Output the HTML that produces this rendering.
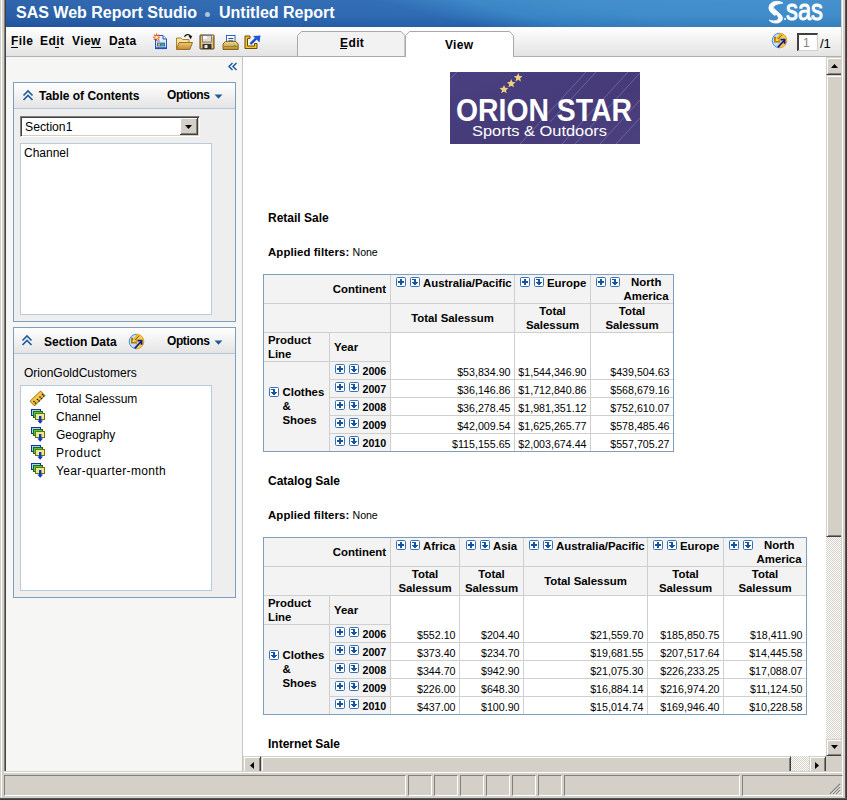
<!DOCTYPE html>
<html><head><meta charset="utf-8">
<style>
*{margin:0;padding:0;box-sizing:border-box}
html,body{width:847px;height:800px;overflow:hidden;background:#d4d0c8;font-family:"Liberation Sans",sans-serif}
.a{position:absolute}
.t{position:absolute;white-space:nowrap;line-height:1}
/* title */
#title{left:6px;top:0;width:835px;height:27px;background:linear-gradient(rgba(255,255,255,0.05),rgba(255,255,255,0.03) 55%,rgba(0,0,40,0.07)),linear-gradient(15deg,#2359a4 0%,#2964ae 30%,#2867b1 50%,#3382c4 60%,#3a88c8 72%,#3c8aca 100%)}
#toolbar{left:6px;top:27px;width:835px;height:29px;background:linear-gradient(#ffffff,#e3e3e3)}
.menu{font-size:12px;font-weight:bold;color:#000;top:35px;letter-spacing:0.4px}
.menu u{text-decoration:none}
.ul{position:absolute;height:1px;background:#000;top:47px}
.sbtn{background:#d4d0c8;border-top:1px solid #fff;border-left:1px solid #fff;box-shadow:inset -1px -1px 0 #808080}
.check{background-image:conic-gradient(#d4d0c8 25%,#fff 0 50%,#d4d0c8 0 75%,#fff 0);background-size:2px 2px}
.vbtn{background:#d4d0c8;border-top:1px solid #d4d0c8;border-left:1px solid #d4d0c8;border-bottom:1px solid #404040;box-shadow:inset 1px 1px 0 #fff,inset 0 -1px 0 #808080}
.hbtn{background:#d4d0c8;border-top:1px solid #d4d0c8;border-left:1px solid #d4d0c8;border-right:1px solid #404040;box-shadow:inset 1px 1px 0 #fff,inset -1px 0 0 #808080}
.pnl{border:1px solid #7f9dbd;background:#eeeeee}
.phd{background:linear-gradient(#ffffff,#e4e4e4);border-bottom:1px solid #b5c7da}
.hd{font-size:12px;font-weight:bold;color:#000}
.lst{background:#fff;border:1px solid #b9cadb}
.it{font-size:12px;color:#000}
</style></head><body>
<!-- window frame lines -->
<div class="a" style="left:1px;top:0;width:1px;height:797px;background:#fff"></div>
<div class="a" style="left:4px;top:0;width:1px;height:771px;background:#808080"></div>
<div class="a" style="left:5px;top:0;width:1px;height:771px;background:#404040"></div>
<div class="a" style="left:842px;top:0;width:1px;height:797px;background:#fff"></div>
<div class="a" style="left:845px;top:0;width:2px;height:800px;background:linear-gradient(90deg,#606060,#303030)"></div>
<div class="a" style="left:0;top:798px;width:847px;height:2px;background:linear-gradient(#606060,#303030)"></div>
<div class="a" style="left:4px;top:772px;width:838px;height:1px;background:#fff"></div>

<!-- title bar -->
<div id="title" class="a"></div>
<div class="t" style="left:16px;top:5px;font-size:16px;font-weight:bold;color:#fff">SAS Web Report Studio</div>
<div class="a" style="left:205px;top:12px;width:5px;height:5px;border-radius:50%;background:#a9c3e3"></div>
<div class="t" style="left:219px;top:5px;font-size:16px;font-weight:bold;color:#fff">Untitled Report</div>
<!-- sas logo -->
<svg class="a" style="left:764px;top:0" width="64" height="26" viewBox="0 0 64 26">
  <path d="M19 3 C14 0 6 1 5 7 C4.5 11 8 13.5 11 15.5 L13 13.5 C10 11.5 8 9 10 6 C12 3.8 16 3.8 19 3 Z" fill="#fff" stroke="#fff" stroke-width="0.8"/>
  <path d="M10 8.5 L17 15 C20 18 18.5 22 13.5 23 C9.5 23.5 6.5 22 5 20 C8 21 12 21.5 14 19.5 C15.5 17.5 13.5 15 8.5 11 Z" fill="#fff" stroke="#fff" stroke-width="0.8"/>
  <circle cx="21" cy="19" r="1" fill="#fff"/>
  <text x="22" y="20" font-family="Liberation Sans" font-size="29" fill="#fff" stroke="#fff" stroke-width="0.9" textLength="37" lengthAdjust="spacingAndGlyphs">sas</text>
</svg>

<!-- toolbar -->
<div id="toolbar" class="a"></div>
<div class="a" style="left:6px;top:56px;width:835px;height:1px;background:#b0b0b0"></div>
<div class="t menu" style="left:11px"><u>F</u>ile</div>
<div class="t menu" style="left:40px">Ed<u>i</u>t</div>
<div class="t menu" style="left:72px">Vie<u>w</u></div>
<div class="t menu" style="left:109px">D<u>a</u>ta</div>
<div class="ul" style="left:11px;width:7px"></div><div class="ul" style="left:55px;width:4px"></div><div class="ul" style="left:91px;width:10px"></div><div class="ul" style="left:118px;width:6px"></div>


<!-- toolbar icons -->
<svg class="a" style="left:152px;top:33px" width="17" height="17" viewBox="0 0 17 17">
 <defs><linearGradient id="dg" x1="0" y1="0" x2="0" y2="1"><stop offset="0" stop-color="#f6f9ff"/><stop offset="1" stop-color="#c4d8f6"/></linearGradient>
 <linearGradient id="fg" x1="0" y1="0" x2="0" y2="1"><stop offset="0" stop-color="#f0cc70"/><stop offset="1" stop-color="#c08830"/></linearGradient>
 <linearGradient id="pg" x1="0" y1="0" x2="0" y2="1"><stop offset="0" stop-color="#f2d890"/><stop offset="1" stop-color="#b88a30"/></linearGradient></defs>
 <path d="M3.5 2.5 L11 2.5 L14.5 6 L14.5 15 L3.5 15 Z" fill="url(#dg)" stroke="#2a55b5"/>
 <path d="M11 2.5 L11 6 L14.5 6" fill="#dce9fb" stroke="#2a55b5"/>
 <rect x="3" y="14.5" width="12" height="1.6" fill="#2450b0"/>
 <rect x="5" y="9.6" width="8" height="3.8" fill="#3b6bcb"/>
 <rect x="6" y="10.6" width="2" height="2" fill="#f0c020"/><rect x="9" y="10.6" width="3" height="2" fill="#2cc040"/>
 <rect x="5" y="7.6" width="3" height="1" fill="#5a88d8"/>
 <g stroke="#f05a10" stroke-width="1.1"><path d="M4.5 0.5 L4.5 8 M0.8 4.3 L8.2 4.3 M1.9 1.7 L7.1 6.9 M7.1 1.7 L1.9 6.9"/></g>
 <circle cx="4.5" cy="4.3" r="1.5" fill="#fff0c0"/>
</svg>
<svg class="a" style="left:175px;top:33px" width="19" height="18" viewBox="0 0 19 18">
 <path d="M1.5 5 L6 5 L7.5 6.5 L14 6.5 L14 16 L1.5 16 Z" fill="#f6e49a" stroke="#a88030"/>
 <path d="M1.5 16.5 L4 9.5 L17.5 9.5 L14.8 16.5 Z" fill="url(#fg)" stroke="#9a7228"/>
 <path d="M9.5 3.8 C10.5 1.2 14.2 0.8 15.6 3.4" stroke="#111" stroke-width="1.4" fill="none"/>
 <path d="M13.6 3.3 L17.2 2.8 L15.8 6.2 Z" fill="#111"/>
</svg>
<svg class="a" style="left:199px;top:34px" width="17" height="16" viewBox="0 0 17 16">
 <rect x="1" y="1" width="14" height="14" rx="0.5" fill="#d4a858" stroke="#5a3c10"/>
 <rect x="2.2" y="2" width="11.6" height="12" fill="#e8c478"/>
 <rect x="3.5" y="1.5" width="9" height="6.5" fill="#dcdcdc" stroke="#707070" stroke-width="0.8"/>
 <rect x="4" y="2" width="4" height="3" fill="#f8f8f8"/>
 <rect x="3.5" y="10" width="9" height="5" fill="#333"/>
 <rect x="5.5" y="11" width="3" height="3" fill="#e8e8e8"/>
 <rect x="13.2" y="1.5" width="1" height="1.2" fill="#fff"/>
</svg>
<svg class="a" style="left:222px;top:34px" width="17" height="17" viewBox="0 0 17 17">
 <rect x="4.5" y="1.5" width="8.5" height="8" fill="#fff" stroke="#2a64d0"/>
 <rect x="6.3" y="4" width="5" height="1.1" fill="#2050a0"/><rect x="6.3" y="6.3" width="5" height="1.1" fill="#2050a0"/>
 <path d="M1 10 L3.5 7.5 L14 7.5 L16.2 10 L16.2 15.5 L1 15.5 Z" fill="url(#pg)" stroke="#8a6418"/>
 <rect x="1.5" y="12" width="14.2" height="0.9" fill="#a07a28"/>
 <rect x="11.5" y="11" width="2" height="1" fill="#30c030"/>
</svg>
<svg class="a" style="left:244px;top:35px" width="18" height="15" viewBox="0 0 18 15">
 <path d="M1 1 L6 1 L6 3.5 L3.5 3.5 L3.5 11 L10.5 11 L10.5 8.5 L13 8.5 L13 13.5 L1 13.5 Z" fill="#f2c424" stroke="#6a4a08"/>
 <path d="M6.5 9 L12 3.5" stroke="#1048c8" stroke-width="2.4"/>
 <path d="M9 1 L16.5 0.5 L15.5 7.5 Z" fill="#1a56de"/>
</svg>
<!-- tabs -->
<svg class="a" style="left:297px;top:31px" width="109" height="26"><path d="M0.5 25.5 L0.5 4.5 L4.5 0.5 L104 0.5 L108.5 5 L108.5 25.5 L0.5 25.5" fill="#f2f2f2" stroke="#a9a9a9"/><path d="M107.5 5 L107.5 25" stroke="#c8c8c8"/></svg>
<div class="t menu" style="left:340px;top:37px">E<span style="">dit</span></div>
<div class="a" style="left:340px;top:48px;width:7px;height:1px;background:#000"></div>
<svg class="a" style="left:405px;top:31px" width="109" height="27"><path d="M0.5 26 L0.5 4.5 L4.5 0.5 L104.5 0.5 L108.5 4.5 L108.5 26" fill="#fff" stroke="#a9a9a9"/></svg>
<div class="t menu" style="left:445px;top:39px;letter-spacing:0.3px">View</div>
<!-- page nav -->
<svg class="a" style="left:771px;top:32px" width="17" height="17" viewBox="0 0 17 17">
 <path d="M8.5 1.2 A7.3 7.3 0 0 0 8.5 15.8 Z" fill="#c6def6" stroke="#4a88e0" stroke-width="1"/>
 <path d="M8.5 1.2 A7.3 7.3 0 0 1 8.5 15.8 Z" fill="#f6cc50" stroke="#e0a020" stroke-width="1"/>
 <path d="M10.8 1.8 L4.5 8" stroke="#f0b820" stroke-width="2.2"/>
 <path d="M11.3 2.8 L5.5 8.6" stroke="#6a4a00" stroke-width="0.8"/>
 <path d="M4 4.8 L4 9.6 L8.5 9.6" stroke="#b07800" stroke-width="2" fill="none"/>
 <rect x="4.6" y="7.2" width="2.4" height="1.8" fill="#ffe040"/>
 <path d="M6.8 15.2 L13 8.6" stroke="#0c1890" stroke-width="1.8"/>
 <path d="M9.5 7.6 L13.6 7.6 L13.6 11.8" stroke="#0c1890" stroke-width="1.8" fill="none"/>
 <path d="M6 14.4 L11.5 8.6" stroke="#a0d0ff" stroke-width="0.9"/>
</svg>
<div class="a" style="left:797px;top:33px;width:21px;height:18px;background:#fff;border-top:2px solid #404040;border-left:2px solid #404040;border-right:1px solid #d4d0c8;border-bottom:1px solid #d4d0c8"></div>
<div class="t" style="left:803px;top:37px;font-size:12px;color:#808080">1</div>
<div class="t" style="left:820px;top:37px;font-size:13px;color:#000">/1</div>

<!-- left panel -->
<div class="a" style="left:6px;top:57px;width:236px;height:714px;background:#f6f6f4"></div>
<div class="a" style="left:242px;top:57px;width:1px;height:714px;background:#c4c4c4"></div>


<!-- sidebar content -->
<svg class="a" style="left:228px;top:61px" width="11" height="11" viewBox="0 0 11 11"><path d="M4.5 2 L1 5.5 L4.5 9 M8.5 2 L5 5.5 L8.5 9" stroke="#1d5a9e" stroke-width="1.5" fill="none"/></svg>
<!-- TOC panel -->
<div class="a pnl" style="left:13px;top:82px;width:223px;height:240px"></div>
<div class="a phd" style="left:14px;top:83px;width:221px;height:26px"></div>
<svg class="a" style="left:22px;top:89px" width="12" height="12" viewBox="0 0 12 12"><path d="M1.5 6.5 L6 2 L10.5 6.5 M1.5 11 L6 6.5 L10.5 11" stroke="#1d5a9e" stroke-width="1.6" fill="none"/></svg>
<div class="t hd" style="left:39px;top:90px">Table of Contents</div>
<div class="t hd" style="left:167px;top:89px;letter-spacing:-0.4px">Options</div>
<svg class="a" style="left:214px;top:94px" width="9" height="6" viewBox="0 0 9 6"><path d="M0.5 0.5 L8.5 0.5 L4.5 4.8 Z" fill="#1d5a9e"/></svg>
<div class="a" style="left:20px;top:116px;width:180px;height:21px;background:#fff;border-top:1px solid #808080;border-left:1px solid #808080;border-right:1px solid #fff;border-bottom:1px solid #fff;box-shadow:inset 1px 1px 0 #404040,inset -1px -1px 0 #d4d0c8"></div>
<div class="t it" style="left:25px;top:121px;font-size:12.2px">Section1</div>
<div class="a" style="left:180px;top:118px;width:18px;height:17px;background:#d4d0c8;border-right:1px solid #404040;border-bottom:1px solid #404040;box-shadow:inset 1px 1px 0 #fff,inset -1px -1px 0 #808080"></div>
<svg class="a" style="left:185px;top:125px" width="7" height="4" viewBox="0 0 7 4"><path d="M0 0 L7 0 L3.5 4 Z" fill="#000"/></svg>
<div class="a lst" style="left:20px;top:143px;width:192px;height:172px"></div>
<div class="t it" style="left:24px;top:147px">Channel</div>
<!-- Section data panel -->
<div class="a pnl" style="left:13px;top:327px;width:223px;height:271px"></div>
<div class="a phd" style="left:14px;top:328px;width:221px;height:26px"></div>
<svg class="a" style="left:21px;top:334px" width="12" height="12" viewBox="0 0 12 12"><path d="M1.5 6.5 L6 2 L10.5 6.5 M1.5 11 L6 6.5 L10.5 11" stroke="#1d5a9e" stroke-width="1.6" fill="none"/></svg>
<div class="t hd" style="left:44px;top:335.5px">Section Data</div>
<svg class="a" style="left:128px;top:333px" width="17" height="17" viewBox="0 0 17 17">
 <path d="M8.5 1.2 A7.3 7.3 0 0 0 8.5 15.8 Z" fill="#c6def6" stroke="#4a88e0" stroke-width="1"/>
 <path d="M8.5 1.2 A7.3 7.3 0 0 1 8.5 15.8 Z" fill="#f6cc50" stroke="#e0a020" stroke-width="1"/>
 <path d="M10.8 1.8 L4.5 8" stroke="#f0b820" stroke-width="2.2"/>
 <path d="M11.3 2.8 L5.5 8.6" stroke="#6a4a00" stroke-width="0.8"/>
 <path d="M4 4.8 L4 9.6 L8.5 9.6" stroke="#b07800" stroke-width="2" fill="none"/>
 <rect x="4.6" y="7.2" width="2.4" height="1.8" fill="#ffe040"/>
 <path d="M6.8 15.2 L13 8.6" stroke="#0c1890" stroke-width="1.8"/>
 <path d="M9.5 7.6 L13.6 7.6 L13.6 11.8" stroke="#0c1890" stroke-width="1.8" fill="none"/>
 <path d="M6 14.4 L11.5 8.6" stroke="#a0d0ff" stroke-width="0.9"/>
</svg>
<div class="t hd" style="left:167px;top:335px;letter-spacing:-0.4px">Options</div>
<svg class="a" style="left:214px;top:340px" width="9" height="6" viewBox="0 0 9 6"><path d="M0.5 0.5 L8.5 0.5 L4.5 4.8 Z" fill="#1d5a9e"/></svg>
<div class="t it" style="left:24px;top:367px">OrionGoldCustomers</div>
<div class="a lst" style="left:20px;top:385px;width:192px;height:206px"></div>
<svg class="a" style="left:29px;top:390px" width="17" height="17" viewBox="0 0 17 17">
 <defs><linearGradient id="rl" x1="0" y1="0" x2="1" y2="1"><stop offset="0" stop-color="#ffe070"/><stop offset="1" stop-color="#e8a810"/></linearGradient></defs>
 <path d="M1 11.2 L11.6 1 L15.9 5.5 L5.5 15.9 Z" fill="url(#rl)" stroke="#8a5a00" stroke-width="0.9"/>
 <g fill="#111"><circle cx="5" cy="11.5" r="0.8"/><circle cx="6.5" cy="13" r="0.8"/><circle cx="8.5" cy="9.5" r="0.8"/><circle cx="10" cy="11" r="0.8"/><circle cx="11" cy="7" r="0.8"/><circle cx="12.5" cy="8.5" r="0.8"/><circle cx="13.5" cy="4.5" r="0.8"/><circle cx="14.8" cy="6" r="0.8"/></g>
</svg>
<div class="t it" style="left:56px;top:393px">Total Salessum</div>
<svg class="a" style="left:31px;top:409px" width="16" height="16" viewBox="0 0 16 16"><rect x="0.5" y="0.5" width="9" height="6" fill="#b0d0f8" stroke="#1030b0"/><rect x="2.5" y="2.5" width="9" height="6" fill="#40d040" stroke="#107010"/><rect x="4.5" y="4.5" width="9" height="6" fill="#f0e890" stroke="#707010"/><rect x="8" y="7" width="2.4" height="5" fill="#1038b8"/><path d="M6.3 11.5 L12.1 11.5 L9.2 14.8 Z" fill="#1038b8"/></svg><div class="t it" style="left:56px;top:411px">Channel</div>
<svg class="a" style="left:31px;top:427px" width="16" height="16" viewBox="0 0 16 16"><rect x="0.5" y="0.5" width="9" height="6" fill="#b0d0f8" stroke="#1030b0"/><rect x="2.5" y="2.5" width="9" height="6" fill="#40d040" stroke="#107010"/><rect x="4.5" y="4.5" width="9" height="6" fill="#f0e890" stroke="#707010"/><rect x="8" y="7" width="2.4" height="5" fill="#1038b8"/><path d="M6.3 11.5 L12.1 11.5 L9.2 14.8 Z" fill="#1038b8"/></svg><div class="t it" style="left:56px;top:429px">Geography</div>
<svg class="a" style="left:31px;top:445px" width="16" height="16" viewBox="0 0 16 16"><rect x="0.5" y="0.5" width="9" height="6" fill="#b0d0f8" stroke="#1030b0"/><rect x="2.5" y="2.5" width="9" height="6" fill="#40d040" stroke="#107010"/><rect x="4.5" y="4.5" width="9" height="6" fill="#f0e890" stroke="#707010"/><rect x="8" y="7" width="2.4" height="5" fill="#1038b8"/><path d="M6.3 11.5 L12.1 11.5 L9.2 14.8 Z" fill="#1038b8"/></svg><div class="t it" style="left:56px;top:447px;letter-spacing:0.55px">Product</div>
<svg class="a" style="left:31px;top:463px" width="16" height="16" viewBox="0 0 16 16"><rect x="0.5" y="0.5" width="9" height="6" fill="#b0d0f8" stroke="#1030b0"/><rect x="2.5" y="2.5" width="9" height="6" fill="#40d040" stroke="#107010"/><rect x="4.5" y="4.5" width="9" height="6" fill="#f0e890" stroke="#707010"/><rect x="8" y="7" width="2.4" height="5" fill="#1038b8"/><path d="M6.3 11.5 L12.1 11.5 L9.2 14.8 Z" fill="#1038b8"/></svg><div class="t it" style="left:56px;top:465px;letter-spacing:0.36px">Year-quarter-month</div>

<!-- content -->
<div id="content" class="a" style="left:243px;top:57px;width:583px;height:699px;background:#fff;overflow:hidden"></div>


<!-- report -->
<svg width="0" height="0" style="position:absolute"><defs>
<symbol id="ipl" viewBox="0 0 10 10"><rect x="0.5" y="0.5" width="9" height="9" rx="1.2" fill="#fff" stroke="#3670b4"/><g fill="#1a539d" shape-rendering="crispEdges"><rect x="2" y="4" width="6" height="2"/><rect x="4" y="2" width="2" height="6"/></g></symbol>
<symbol id="idn" viewBox="0 0 10 10"><rect x="0.5" y="0.5" width="9" height="9" rx="1.2" fill="#fff" stroke="#3670b4"/><g fill="#1a539d" shape-rendering="crispEdges"><rect x="2" y="2" width="4" height="1.4"/><rect x="4" y="2" width="2" height="4"/><rect x="2" y="5" width="6" height="1"/><rect x="3" y="6" width="4" height="1"/><rect x="4" y="7" width="2" height="1"/></g></symbol>
</defs></svg><svg class="a" style="left:450px;top:72px" width="190" height="72" viewBox="0 0 190 72">
<defs><linearGradient id="lg" x1="0" y1="0" x2="1" y2="1"><stop offset="0" stop-color="#4a3f80"/><stop offset="0.6" stop-color="#463b78"/><stop offset="1" stop-color="#4b417e"/></linearGradient></defs>
<rect width="190" height="72" fill="url(#lg)"/>
<g stroke="#8a86c8" stroke-width="0.7" opacity="0.75"><path d="M0 7 L7 0"/><path d="M70 72 L136 0"/><path d="M100 50 L146 0"/><path d="M125 72 L190 1"/><path d="M150 72 L190 28"/><path d="M166 72 L190 46"/><path d="M112 72 L178 0"/></g>
<g fill="#f0d27e">
<path d="M54.00 12.90 L55.22 15.83 L58.37 16.08 L55.97 18.14 L56.70 21.22 L54.00 19.57 L51.30 21.22 L52.03 18.14 L49.63 16.08 L52.78 15.83 Z"/><path d="M61.20 7.00 L62.42 9.93 L65.57 10.18 L63.17 12.24 L63.90 15.32 L61.20 13.67 L58.50 15.32 L59.23 12.24 L56.83 10.18 L59.98 9.93 Z"/><path d="M68.20 1.10 L69.42 4.03 L72.57 4.28 L70.17 6.34 L70.90 9.42 L68.20 7.77 L65.50 9.42 L66.23 6.34 L63.83 4.28 L66.98 4.03 Z"/>
</g>
<text x="6" y="48.8" font-family="Liberation Sans" font-weight="bold" font-size="30.5" fill="#fff" textLength="176" lengthAdjust="spacingAndGlyphs">ORION STAR</text>
<text x="22" y="63.5" font-family="Liberation Sans" font-size="15.5" fill="#fff" textLength="135" lengthAdjust="spacingAndGlyphs">Sports &amp; Outdoors</text>
</svg>
<div class="t" style="left:268px;top:211.54px;font-size:12px;font-weight:bold">Retail Sale</div><div class="t" style="left:268px;top:247.35px;font-size:11.4px;font-weight:bold;letter-spacing:0.1px">Applied filters: <span style="font-weight:normal;font-size:10.6px;letter-spacing:-0.1px">None</span></div><div class="a" style="left:263px;top:274px;width:411px;height:178px;border:1px solid #7f9dbd;background:#fff"></div><div class="a" style="left:264px;top:275px;width:409px;height:57px;background:#f3f3f3"></div><div class="a" style="left:264px;top:332px;width:126px;height:119px;background:#f3f3f3"></div><div class="a" style="left:264px;top:303px;width:409px;height:1px;background:#cfcfcf"></div><div class="a" style="left:264px;top:332px;width:409px;height:1px;background:#cfcfcf"></div><div class="a" style="left:264px;top:361px;width:126px;height:1px;background:#cfcfcf"></div><div class="a" style="left:330px;top:379px;width:343px;height:1px;background:#cfcfcf"></div><div class="a" style="left:330px;top:397px;width:343px;height:1px;background:#cfcfcf"></div><div class="a" style="left:330px;top:415px;width:343px;height:1px;background:#cfcfcf"></div><div class="a" style="left:330px;top:433px;width:343px;height:1px;background:#cfcfcf"></div><div class="a" style="left:329px;top:333px;width:1px;height:118px;background:#cfcfcf"></div><div class="a" style="left:390px;top:275px;width:1px;height:176px;background:#cfcfcf"></div><div class="a" style="left:514px;top:275px;width:1px;height:176px;background:#cfcfcf"></div><div class="a" style="left:590px;top:275px;width:1px;height:176px;background:#cfcfcf"></div><div class="t" style="right:461px;top:283.75px;font-size:11.4px;font-weight:bold">Continent</div><div class="t" style="left:268px;top:334.85px;font-size:11.4px;font-weight:bold">Product</div><div class="t" style="left:268px;top:348.85px;font-size:11.4px;font-weight:bold">Line</div><div class="t" style="left:334px;top:342.35px;font-size:11.4px;font-weight:bold">Year</div><svg class="a" style="left:396px;top:277px" width="10" height="10"><use href="#ipl"/></svg><svg class="a" style="left:410px;top:277px" width="10" height="10"><use href="#idn"/></svg><div class="t" style="left:423px;top:278.35px;font-size:11.4px;font-weight:bold">Australia/Pacific</div><div class="t" style="left:352.5px;width:200px;text-align:center;top:313.35px;font-size:11.4px;font-weight:bold">Total Salessum</div><div class="t" style="right:336.5px;top:366.97px;font-size:10.67px;font-weight:normal">$53,834.90</div><div class="t" style="right:336.5px;top:384.97px;font-size:10.67px;font-weight:normal">$36,146.86</div><div class="t" style="right:336.5px;top:402.97px;font-size:10.67px;font-weight:normal">$36,278.45</div><div class="t" style="right:336.5px;top:420.97px;font-size:10.67px;font-weight:normal">$42,009.54</div><div class="t" style="right:336.5px;top:438.97px;font-size:10.67px;font-weight:normal">$115,155.65</div><svg class="a" style="left:520px;top:277px" width="10" height="10"><use href="#ipl"/></svg><svg class="a" style="left:534px;top:277px" width="10" height="10"><use href="#idn"/></svg><div class="t" style="left:547px;top:278.35px;font-size:11.4px;font-weight:bold">Europe</div><div class="t" style="left:452.5px;width:200px;text-align:center;top:305.85px;font-size:11.4px;font-weight:bold">Total</div><div class="t" style="left:452.5px;width:200px;text-align:center;top:319.85px;font-size:11.4px;font-weight:bold">Salessum</div><div class="t" style="right:260.5px;top:366.97px;font-size:10.67px;font-weight:normal">$1,544,346.90</div><div class="t" style="right:260.5px;top:384.97px;font-size:10.67px;font-weight:normal">$1,712,840.86</div><div class="t" style="right:260.5px;top:402.97px;font-size:10.67px;font-weight:normal">$1,981,351.12</div><div class="t" style="right:260.5px;top:420.97px;font-size:10.67px;font-weight:normal">$1,625,265.77</div><div class="t" style="right:260.5px;top:438.97px;font-size:10.67px;font-weight:normal">$2,003,674.44</div><svg class="a" style="left:596px;top:277px" width="10" height="10"><use href="#ipl"/></svg><svg class="a" style="left:610px;top:277px" width="10" height="10"><use href="#idn"/></svg><div class="t" style="left:631px;top:277.35px;font-size:11.4px;font-weight:bold">North</div><div class="t" style="right:178.5px;top:291.35px;font-size:11.4px;font-weight:bold">America</div><div class="t" style="left:532.0px;width:200px;text-align:center;top:305.85px;font-size:11.4px;font-weight:bold">Total</div><div class="t" style="left:532.0px;width:200px;text-align:center;top:319.85px;font-size:11.4px;font-weight:bold">Salessum</div><div class="t" style="right:177.5px;top:366.97px;font-size:10.67px;font-weight:normal">$439,504.63</div><div class="t" style="right:177.5px;top:384.97px;font-size:10.67px;font-weight:normal">$568,679.16</div><div class="t" style="right:177.5px;top:402.97px;font-size:10.67px;font-weight:normal">$752,610.07</div><div class="t" style="right:177.5px;top:420.97px;font-size:10.67px;font-weight:normal">$578,485.46</div><div class="t" style="right:177.5px;top:438.97px;font-size:10.67px;font-weight:normal">$557,705.27</div><svg class="a" style="left:335px;top:364px" width="10" height="10"><use href="#ipl"/></svg><svg class="a" style="left:349px;top:364px" width="10" height="10"><use href="#idn"/></svg><div class="t" style="left:362.5px;top:365.77px;font-size:10.67px;font-weight:bold">2006</div><svg class="a" style="left:335px;top:382px" width="10" height="10"><use href="#ipl"/></svg><svg class="a" style="left:349px;top:382px" width="10" height="10"><use href="#idn"/></svg><div class="t" style="left:362.5px;top:383.77px;font-size:10.67px;font-weight:bold">2007</div><svg class="a" style="left:335px;top:400px" width="10" height="10"><use href="#ipl"/></svg><svg class="a" style="left:349px;top:400px" width="10" height="10"><use href="#idn"/></svg><div class="t" style="left:362.5px;top:401.77px;font-size:10.67px;font-weight:bold">2008</div><svg class="a" style="left:335px;top:418px" width="10" height="10"><use href="#ipl"/></svg><svg class="a" style="left:349px;top:418px" width="10" height="10"><use href="#idn"/></svg><div class="t" style="left:362.5px;top:419.77px;font-size:10.67px;font-weight:bold">2009</div><svg class="a" style="left:335px;top:436px" width="10" height="10"><use href="#ipl"/></svg><svg class="a" style="left:349px;top:436px" width="10" height="10"><use href="#idn"/></svg><div class="t" style="left:362.5px;top:437.77px;font-size:10.67px;font-weight:bold">2010</div><svg class="a" style="left:269px;top:387px" width="10" height="10"><use href="#idn"/></svg><div class="t" style="left:282.5px;top:387.35px;font-size:11.4px;font-weight:bold">Clothes</div><div class="t" style="left:282.5px;top:401.35px;font-size:11.4px;font-weight:bold">&amp;</div><div class="t" style="left:282.5px;top:415.35px;font-size:11.4px;font-weight:bold">Shoes</div><div class="t" style="left:268px;top:474.54px;font-size:12px;font-weight:bold">Catalog Sale</div><div class="t" style="left:268px;top:510.35px;font-size:11.4px;font-weight:bold;letter-spacing:0.1px">Applied filters: <span style="font-weight:normal;font-size:10.6px;letter-spacing:-0.1px">None</span></div><div class="a" style="left:263px;top:537px;width:544px;height:178px;border:1px solid #7f9dbd;background:#fff"></div><div class="a" style="left:264px;top:538px;width:542px;height:57px;background:#f3f3f3"></div><div class="a" style="left:264px;top:595px;width:126px;height:119px;background:#f3f3f3"></div><div class="a" style="left:264px;top:566px;width:542px;height:1px;background:#cfcfcf"></div><div class="a" style="left:264px;top:595px;width:542px;height:1px;background:#cfcfcf"></div><div class="a" style="left:264px;top:624px;width:126px;height:1px;background:#cfcfcf"></div><div class="a" style="left:330px;top:642px;width:476px;height:1px;background:#cfcfcf"></div><div class="a" style="left:330px;top:660px;width:476px;height:1px;background:#cfcfcf"></div><div class="a" style="left:330px;top:678px;width:476px;height:1px;background:#cfcfcf"></div><div class="a" style="left:330px;top:696px;width:476px;height:1px;background:#cfcfcf"></div><div class="a" style="left:329px;top:596px;width:1px;height:118px;background:#cfcfcf"></div><div class="a" style="left:390px;top:538px;width:1px;height:176px;background:#cfcfcf"></div><div class="a" style="left:459px;top:538px;width:1px;height:176px;background:#cfcfcf"></div><div class="a" style="left:523px;top:538px;width:1px;height:176px;background:#cfcfcf"></div><div class="a" style="left:647px;top:538px;width:1px;height:176px;background:#cfcfcf"></div><div class="a" style="left:723px;top:538px;width:1px;height:176px;background:#cfcfcf"></div><div class="t" style="right:461px;top:546.75px;font-size:11.4px;font-weight:bold">Continent</div><div class="t" style="left:268px;top:597.85px;font-size:11.4px;font-weight:bold">Product</div><div class="t" style="left:268px;top:611.85px;font-size:11.4px;font-weight:bold">Line</div><div class="t" style="left:334px;top:605.35px;font-size:11.4px;font-weight:bold">Year</div><svg class="a" style="left:396px;top:540px" width="10" height="10"><use href="#ipl"/></svg><svg class="a" style="left:410px;top:540px" width="10" height="10"><use href="#idn"/></svg><div class="t" style="left:423px;top:541.35px;font-size:11.4px;font-weight:bold">Africa</div><div class="t" style="left:325.0px;width:200px;text-align:center;top:568.85px;font-size:11.4px;font-weight:bold">Total</div><div class="t" style="left:325.0px;width:200px;text-align:center;top:582.85px;font-size:11.4px;font-weight:bold">Salessum</div><div class="t" style="right:391.5px;top:629.97px;font-size:10.67px;font-weight:normal">$552.10</div><div class="t" style="right:391.5px;top:647.97px;font-size:10.67px;font-weight:normal">$373.40</div><div class="t" style="right:391.5px;top:665.97px;font-size:10.67px;font-weight:normal">$344.70</div><div class="t" style="right:391.5px;top:683.97px;font-size:10.67px;font-weight:normal">$226.00</div><div class="t" style="right:391.5px;top:701.97px;font-size:10.67px;font-weight:normal">$437.00</div><svg class="a" style="left:466px;top:540px" width="10" height="10"><use href="#ipl"/></svg><svg class="a" style="left:480px;top:540px" width="10" height="10"><use href="#idn"/></svg><div class="t" style="left:493px;top:541.35px;font-size:11.4px;font-weight:bold">Asia</div><div class="t" style="left:391.5px;width:200px;text-align:center;top:568.85px;font-size:11.4px;font-weight:bold">Total</div><div class="t" style="left:391.5px;width:200px;text-align:center;top:582.85px;font-size:11.4px;font-weight:bold">Salessum</div><div class="t" style="right:327.5px;top:629.97px;font-size:10.67px;font-weight:normal">$204.40</div><div class="t" style="right:327.5px;top:647.97px;font-size:10.67px;font-weight:normal">$234.70</div><div class="t" style="right:327.5px;top:665.97px;font-size:10.67px;font-weight:normal">$942.90</div><div class="t" style="right:327.5px;top:683.97px;font-size:10.67px;font-weight:normal">$648.30</div><div class="t" style="right:327.5px;top:701.97px;font-size:10.67px;font-weight:normal">$100.90</div><svg class="a" style="left:529px;top:540px" width="10" height="10"><use href="#ipl"/></svg><svg class="a" style="left:543px;top:540px" width="10" height="10"><use href="#idn"/></svg><div class="t" style="left:556px;top:541.35px;font-size:11.4px;font-weight:bold">Australia/Pacific</div><div class="t" style="left:485.5px;width:200px;text-align:center;top:576.35px;font-size:11.4px;font-weight:bold">Total Salessum</div><div class="t" style="right:203.5px;top:629.97px;font-size:10.67px;font-weight:normal">$21,559.70</div><div class="t" style="right:203.5px;top:647.97px;font-size:10.67px;font-weight:normal">$19,681.55</div><div class="t" style="right:203.5px;top:665.97px;font-size:10.67px;font-weight:normal">$21,075.30</div><div class="t" style="right:203.5px;top:683.97px;font-size:10.67px;font-weight:normal">$16,884.14</div><div class="t" style="right:203.5px;top:701.97px;font-size:10.67px;font-weight:normal">$15,014.74</div><svg class="a" style="left:653px;top:540px" width="10" height="10"><use href="#ipl"/></svg><svg class="a" style="left:667px;top:540px" width="10" height="10"><use href="#idn"/></svg><div class="t" style="left:680px;top:541.35px;font-size:11.4px;font-weight:bold">Europe</div><div class="t" style="left:585.5px;width:200px;text-align:center;top:568.85px;font-size:11.4px;font-weight:bold">Total</div><div class="t" style="left:585.5px;width:200px;text-align:center;top:582.85px;font-size:11.4px;font-weight:bold">Salessum</div><div class="t" style="right:127.5px;top:629.97px;font-size:10.67px;font-weight:normal">$185,850.75</div><div class="t" style="right:127.5px;top:647.97px;font-size:10.67px;font-weight:normal">$207,517.64</div><div class="t" style="right:127.5px;top:665.97px;font-size:10.67px;font-weight:normal">$226,233.25</div><div class="t" style="right:127.5px;top:683.97px;font-size:10.67px;font-weight:normal">$216,974.20</div><div class="t" style="right:127.5px;top:701.97px;font-size:10.67px;font-weight:normal">$169,946.40</div><svg class="a" style="left:729px;top:540px" width="10" height="10"><use href="#ipl"/></svg><svg class="a" style="left:743px;top:540px" width="10" height="10"><use href="#idn"/></svg><div class="t" style="left:764px;top:540.35px;font-size:11.4px;font-weight:bold">North</div><div class="t" style="right:45.5px;top:554.35px;font-size:11.4px;font-weight:bold">America</div><div class="t" style="left:665.0px;width:200px;text-align:center;top:568.85px;font-size:11.4px;font-weight:bold">Total</div><div class="t" style="left:665.0px;width:200px;text-align:center;top:582.85px;font-size:11.4px;font-weight:bold">Salessum</div><div class="t" style="right:44.5px;top:629.97px;font-size:10.67px;font-weight:normal">$18,411.90</div><div class="t" style="right:44.5px;top:647.97px;font-size:10.67px;font-weight:normal">$14,445.58</div><div class="t" style="right:44.5px;top:665.97px;font-size:10.67px;font-weight:normal">$17,088.07</div><div class="t" style="right:44.5px;top:683.97px;font-size:10.67px;font-weight:normal">$11,124.50</div><div class="t" style="right:44.5px;top:701.97px;font-size:10.67px;font-weight:normal">$10,228.58</div><svg class="a" style="left:335px;top:627px" width="10" height="10"><use href="#ipl"/></svg><svg class="a" style="left:349px;top:627px" width="10" height="10"><use href="#idn"/></svg><div class="t" style="left:362.5px;top:628.77px;font-size:10.67px;font-weight:bold">2006</div><svg class="a" style="left:335px;top:645px" width="10" height="10"><use href="#ipl"/></svg><svg class="a" style="left:349px;top:645px" width="10" height="10"><use href="#idn"/></svg><div class="t" style="left:362.5px;top:646.77px;font-size:10.67px;font-weight:bold">2007</div><svg class="a" style="left:335px;top:663px" width="10" height="10"><use href="#ipl"/></svg><svg class="a" style="left:349px;top:663px" width="10" height="10"><use href="#idn"/></svg><div class="t" style="left:362.5px;top:664.77px;font-size:10.67px;font-weight:bold">2008</div><svg class="a" style="left:335px;top:681px" width="10" height="10"><use href="#ipl"/></svg><svg class="a" style="left:349px;top:681px" width="10" height="10"><use href="#idn"/></svg><div class="t" style="left:362.5px;top:682.77px;font-size:10.67px;font-weight:bold">2009</div><svg class="a" style="left:335px;top:699px" width="10" height="10"><use href="#ipl"/></svg><svg class="a" style="left:349px;top:699px" width="10" height="10"><use href="#idn"/></svg><div class="t" style="left:362.5px;top:700.77px;font-size:10.67px;font-weight:bold">2010</div><svg class="a" style="left:269px;top:650px" width="10" height="10"><use href="#idn"/></svg><div class="t" style="left:282.5px;top:650.35px;font-size:11.4px;font-weight:bold">Clothes</div><div class="t" style="left:282.5px;top:664.35px;font-size:11.4px;font-weight:bold">&amp;</div><div class="t" style="left:282.5px;top:678.35px;font-size:11.4px;font-weight:bold">Shoes</div><div class="t" style="left:268px;top:737.54px;font-size:12px;font-weight:bold">Internet Sale</div>
<!-- /report -->

<!-- vertical scrollbar -->
<div class="a check" style="left:826px;top:57px;width:15px;height:699px"></div>
<div class="a vbtn" style="left:826px;top:57px;width:15px;height:18px"></div>
<div class="a vbtn" style="left:826px;top:75px;width:15px;height:462px"></div>
<div class="a vbtn" style="left:826px;top:739px;width:15px;height:17px"></div>
<!-- horizontal scrollbar -->
<div class="a check" style="left:243px;top:756px;width:583px;height:15px"></div>
<div class="a hbtn" style="left:243px;top:756px;width:18px;height:15px"></div>
<div class="a hbtn" style="left:261px;top:756px;width:530px;height:15px"></div>
<div class="a hbtn" style="left:809px;top:756px;width:17px;height:15px"></div>
<div class="a" style="left:826px;top:756px;width:15px;height:15px;background:#d4d0c8"></div>
<!-- status bar -->
<div class="a" style="left:2px;top:773px;width:840px;height:25px;background:#d4d0c8"></div>
<div class="a" style="left:4px;top:772px;width:838px;height:1px;background:#fff"></div>
<div class="a" style="left:4px;top:775px;width:402px;height:21px;border-top:1px solid #808080;border-left:1px solid #808080;border-right:1px solid #fff;border-bottom:1px solid #fff"></div>
<div class="a" style="left:408px;top:775px;width:24px;height:21px;border-top:1px solid #808080;border-left:1px solid #808080;border-right:1px solid #fff;border-bottom:1px solid #fff"></div>
<div class="a" style="left:434px;top:775px;width:24px;height:21px;border-top:1px solid #808080;border-left:1px solid #808080;border-right:1px solid #fff;border-bottom:1px solid #fff"></div>
<div class="a" style="left:460px;top:775px;width:24px;height:21px;border-top:1px solid #808080;border-left:1px solid #808080;border-right:1px solid #fff;border-bottom:1px solid #fff"></div>
<div class="a" style="left:486px;top:775px;width:24px;height:21px;border-top:1px solid #808080;border-left:1px solid #808080;border-right:1px solid #fff;border-bottom:1px solid #fff"></div>
<div class="a" style="left:512px;top:775px;width:24px;height:21px;border-top:1px solid #808080;border-left:1px solid #808080;border-right:1px solid #fff;border-bottom:1px solid #fff"></div>
<div class="a" style="left:538px;top:775px;width:24px;height:21px;border-top:1px solid #808080;border-left:1px solid #808080;border-right:1px solid #fff;border-bottom:1px solid #fff"></div>
<div class="a" style="left:564px;top:775px;width:176px;height:21px;border-top:1px solid #808080;border-left:1px solid #808080;border-right:1px solid #fff;border-bottom:1px solid #fff"></div>
<div class="a" style="left:742px;top:775px;width:101px;height:21px;border-top:1px solid #808080;border-left:1px solid #808080;border-right:1px solid #fff;border-bottom:1px solid #fff"></div>
<svg class="a" style="left:829px;top:783px" width="12" height="12" viewBox="0 0 12 12"><path d="M11 1 L1 11 M11 4 L4 11 M11 7 L7 11" stroke="#808080" stroke-width="1.2"/><path d="M11.8 1.8 L1.8 11.8 M11.8 4.8 L4.8 11.8 M11.8 7.8 L7.8 11.8" stroke="#fff" stroke-width="0.8"/></svg>
<!-- arrows -->
<svg class="a" style="left:831px;top:64px" width="7" height="4"><path d="M0 4 L7 4 L3.5 0 Z" fill="#000"/></svg>
<svg class="a" style="left:831px;top:745px" width="7" height="4"><path d="M0 0 L7 0 L3.5 4 Z" fill="#000"/></svg>
<svg class="a" style="left:250px;top:762px" width="4" height="7"><path d="M4 0 L4 7 L0 3.5 Z" fill="#000"/></svg>
<svg class="a" style="left:815px;top:762px" width="4" height="7"><path d="M0 0 L0 7 L4 3.5 Z" fill="#000"/></svg>
</body></html>
